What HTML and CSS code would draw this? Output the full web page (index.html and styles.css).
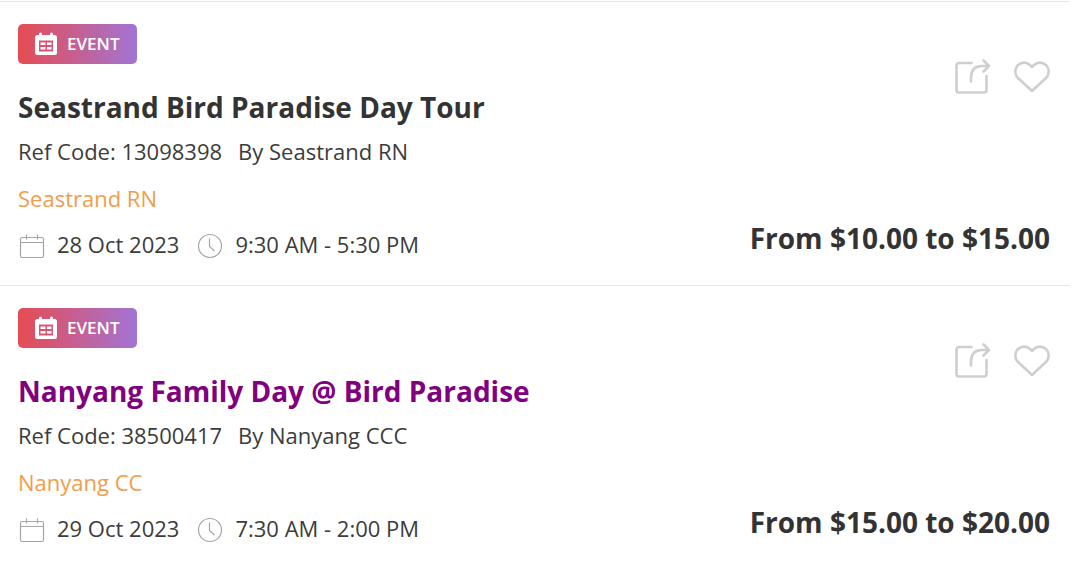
FILE: index.html
```
<!DOCTYPE html>
<html lang="en">
<head>
  <meta charset="UTF-8">
  <title>Events</title>
  <link rel="stylesheet" href="styles.css">
</head>
<body>

  <!-- Shared icons -->
  <svg class="sprite" aria-hidden="true">
    <symbol id="icon-event" viewBox="0 0 22 24">
      <path fill="#fff" fill-rule="evenodd" d="M2.500 3H4V2a1.500 1.500 0 0 1 3 0v1h8V2a1.500 1.500 0 0 1 3 0v1h1.500A2.500 2.500 0 0 1 22 5.500v15a2.500 2.500 0 0 1-2.500 2.500h-17A2.500 2.500 0 0 1 0 20.500v-15A2.500 2.500 0 0 1 2.500 3zM4 8.500v11h14v-11zM5.500 10.500h5v2.500h-5zM12 10.500h4.500v2.500H12zM5.500 15h5v2.500h-5zM12 15h4.500v2.500H12z"/>
    </symbol>
    <symbol id="icon-share" viewBox="0 0 36 36">
      <g fill="none" stroke="#cfcfcf" stroke-width="2.600" stroke-linecap="round" stroke-linejoin="round">
        <path d="M17.500 4H5a2.500 2.500 0 0 0-2.500 2.500v24.500A2.500 2.500 0 0 0 5 33.500h25a2.500 2.500 0 0 0 2.500-2.500V17"/>
        <path d="M17 22.500v-3.500C17 11 21 7 28 7h7M29.500 1.500L35 7l-5.500 5.500"/>
      </g>
    </symbol>
    <symbol id="icon-heart" viewBox="0 0 36 32">
      <path fill="none" stroke="#cfcfcf" stroke-width="2.600" stroke-linejoin="round" d="M18 30L4 17C.5 13.500.5 8 3.500 4.500 7 .8 12.500.6 16 4l2 2 2-2c3.500-3.400 9-3.200 12.500.5C35.500 8 35.500 13.500 32 17z"/>
    </symbol>
    <symbol id="icon-calendar" viewBox="0 0 26 26">
      <g fill="none" stroke="#a6a6a6" stroke-width="1.200">
        <rect x="1.500" y="4.500" width="23" height="20" rx="1.500"/>
        <path d="M1.500 9.500h23M7.500 1.500v5M18.500 1.500v5"/>
      </g>
    </symbol>
    <symbol id="icon-clock" viewBox="0 0 26 26">
      <g fill="none" stroke="#a6a6a6" stroke-width="1.200">
        <circle cx="13" cy="13" r="11.500"/>
        <path d="M12.500 5.500v8l5 4.500"/>
      </g>
    </symbol>
  </svg>

  <main class="event-list">
    <article class="event">
      <div class="event-info">
        <span class="badge"><svg class="badge-icon"><use href="#icon-event"/></svg>EVENT</span>
        <h2><a class="title" href="#">Seastrand Bird Paradise Day Tour</a></h2>
        <p class="ref"><span>Ref Code: 13098398</span><span>By Seastrand RN</span></p>
        <p class="venue">Seastrand RN</p>
        <p class="schedule">
          <svg class="small-icon"><use href="#icon-calendar"/></svg>
          <span class="date">28 Oct 2023</span>
          <svg class="small-icon"><use href="#icon-clock"/></svg>
          <span>9:30 AM - 5:30 PM</span>
        </p>
      </div>
      <div class="event-side">
        <div class="actions">
          <button class="action" type="button" aria-label="Share"><svg class="share-icon"><use href="#icon-share"/></svg></button>
          <button class="action" type="button" aria-label="Favourite"><svg class="heart-icon"><use href="#icon-heart"/></svg></button>
        </div>
        <p class="price">From $10.00 to $15.00</p>
      </div>
    </article>

    <article class="event">
      <div class="event-info">
        <span class="badge"><svg class="badge-icon"><use href="#icon-event"/></svg>EVENT</span>
        <h2><a class="title active" href="#">Nanyang Family Day @ Bird Paradise</a></h2>
        <p class="ref"><span>Ref Code: 38500417</span><span>By Nanyang CCC</span></p>
        <p class="venue">Nanyang CC</p>
        <p class="schedule">
          <svg class="small-icon"><use href="#icon-calendar"/></svg>
          <span class="date">29 Oct 2023</span>
          <svg class="small-icon"><use href="#icon-clock"/></svg>
          <span>7:30 AM - 2:00 PM</span>
        </p>
      </div>
      <div class="event-side">
        <div class="actions">
          <button class="action" type="button" aria-label="Share"><svg class="share-icon"><use href="#icon-share"/></svg></button>
          <button class="action" type="button" aria-label="Favourite"><svg class="heart-icon"><use href="#icon-heart"/></svg></button>
        </div>
        <p class="price">From $15.00 to $20.00</p>
      </div>
    </article>
  </main>

</body>
</html>
```
FILE: styles.css
```
body {
  margin: 0;
  background: #fff;
  color: #3c3c3c;
  font-family: "Open Sans", sans-serif;
  font-size: 22px;
  line-height: 32px;
}

h2,
p {
  margin: 0;
}

.sprite {
  display: none;
}

.event-list {
  margin: 1px 10px 0 0;
}

.event {
  display: flex;
  justify-content: space-between;
  padding: 22px 20px 25px 18px;
  border-top: 1px solid #e5e5e5;
}

.event-info {
  display: flex;
  flex-direction: column;
  align-items: flex-start;
}

.badge {
  display: flex;
  align-items: center;
  gap: 10px;
  height: 40px;
  padding: 0 17px;
  border-radius: 5px;
  background: linear-gradient(90deg, #e64c52, #a274d4);
  color: #fff;
  font-size: 17px;
  font-weight: 600;
}

.badge-icon {
  width: 22px;
  height: 24px;
}

h2 {
  margin-top: 23px;
  font-size: 28px;
  line-height: 40px;
}

.title {
  color: #333;
  text-decoration: none;
}

.title.active {
  color: #800080;
}

.ref {
  display: flex;
  gap: 16px;
  margin-top: 8px;
}

.venue {
  margin-top: 15px;
  color: #f19d4b;
}

.schedule {
  display: flex;
  align-items: center;
  gap: 12px;
  margin-top: 14px;
  padding-left: 1px;
}

.date {
  margin-right: 6px;
}

.small-icon {
  width: 26px;
  height: 26px;
  margin-top: 3px;
}

.event-side {
  display: flex;
  flex-direction: column;
  align-items: flex-end;
  justify-content: space-between;
  padding: 35px 0 2px;
}

.actions {
  display: flex;
  align-items: center;
  gap: 24px;
}

.action {
  display: flex;
  padding: 0;
  border: none;
  background: none;
  cursor: pointer;
}

.share-icon {
  width: 36px;
  height: 36px;
}

.heart-icon {
  width: 36px;
  height: 32px;
}

.price {
  color: #333;
  font-size: 28px;
  font-weight: 700;
  line-height: 40px;
}
```
